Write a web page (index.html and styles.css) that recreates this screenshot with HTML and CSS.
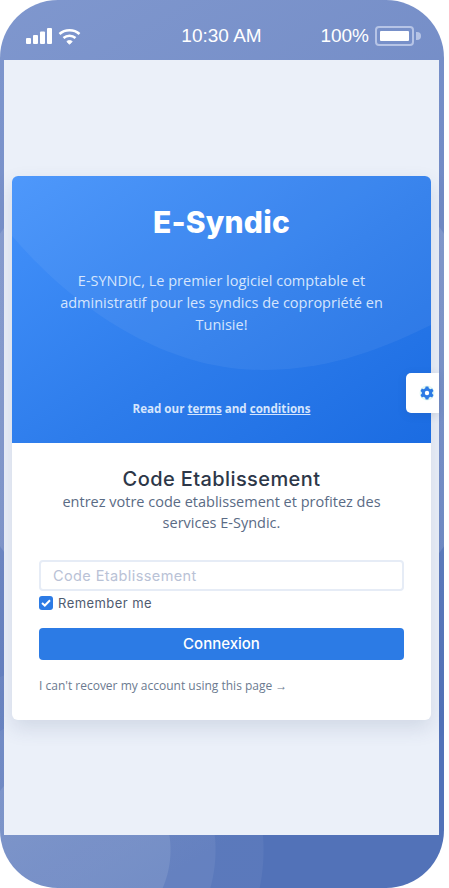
FILE: index.html
```html
<!DOCTYPE html>
<html lang="en">

<head>
    <meta charset="UTF-8" />
    <title>E-Syndic</title>
    <link rel="stylesheet" href="styles.css">
</head>

<body>

    <div class="phone">
        <div class="status-bar">
            <div class="status-left">
                <svg class="signal" width="26" height="16" viewBox="0 0 26 16" fill="#fff">
                    <rect x="0" y="10" width="5" height="6" rx="1" />
                    <rect x="7" y="7" width="5" height="9" rx="1" />
                    <rect x="14" y="3.500" width="5" height="12.500" rx="1" />
                    <rect x="21" y="0" width="5" height="16" rx="1" />
                </svg>
                <svg class="wifi" width="23" height="17" viewBox="0 0 23 17" fill="none" stroke="#fff" stroke-width="2.600">
                    <path d="M1.500 6 C7 1 16 1 21.500 6" />
                    <path d="M5.500 10 C9 7 14 7 17.500 10" />
                    <path d="M8.800 13.500 C10.500 12.300 12.500 12.300 14.200 13.500 L11.500 16.200 Z" fill="#fff" stroke-width="1" />
                </svg>
            </div>
            <div class="status-time">10:30 AM</div>
            <div class="status-right">
                <span>100%</span>
                <div class="battery">
                    <div class="battery-level"></div>
                </div>
                <div class="battery-tip"></div>
            </div>
        </div>

        <div class="screen">
            <div class="card">
                <div class="hero">
                    <svg class="hero-wave" width="419" height="267" viewBox="0 0 419 267">
                        <path d="M0 0 H419 V149 C360 178 310 194 250 194 C150 194 60 130 0 60 Z" fill="#fff" fill-opacity="0.055" />
                    </svg>
                    <h1 class="hero-title">E-Syndic</h1>
                    <p class="hero-text">E-SYNDIC, Le premier logiciel comptable et administratif pour les syndics de copropriété en Tunisie!</p>
                    <p class="hero-terms">Read our <a href="#">terms</a> and <a href="#">conditions</a></p>
                </div>

                <div class="card-body">
                    <h2 class="code-title">Code Etablissement</h2>
                    <p class="code-text">entrez votre code etablissement et profitez des services E-Syndic.</p>
                    <input class="code-input" type="text" placeholder="Code Etablissement">
                    <label class="remember">
                        <span class="check">
                            <svg width="10" height="8" viewBox="0 0 10 8" fill="none" stroke="#fff" stroke-width="2">
                                <path d="M1 4 L3.800 6.500 L9 1.200" />
                            </svg>
                        </span>
                        Remember me
                    </label>
                    <button class="connect">Connexion</button>
                    <a class="recover" href="#">I can't recover my account using this page →</a>
                </div>
            </div>

            <div class="settings-tab">
                <svg width="16" height="16" viewBox="0 0 16 16">
                    <circle cx="8" cy="8" r="7.500" fill="#e3f8f3" />
                    <path d="M6.600 1.500 H9.400 L9.800 3.300 L11.400 4.200 L13.200 3.600 L14.500 6 L13.200 7.200 V8.800 L14.500 10 L13.200 12.400 L11.400 11.800 L9.800 12.700 L9.400 14.500 H6.600 L6.200 12.700 L4.600 11.800 L2.800 12.400 L1.500 10 L2.800 8.800 V7.200 L1.500 6 L2.800 3.600 L4.600 4.200 L6.200 3.300 Z" fill="#2c7be5" />
                    <circle cx="8" cy="8" r="2.200" fill="#fff" />
                </svg>
            </div>
        </div>

        <div class="bottom-bar"></div>
    </div>

</body>

</html>
```

FILE: styles.css
```css
* {
    box-sizing: border-box;
}

body {
    margin: 0;
    background: #fff;
}

.phone {
    width: 444px;
    height: 888px;
    border-radius: 58px;
    overflow: hidden;
    display: flex;
    flex-direction: column;
    padding: 0 5px 0 4px;
    background:
        radial-gradient(circle at 75px 850px, rgba(255, 255, 255, 0.2) 95px, rgba(255, 255, 255, 0.11) 96px, rgba(255, 255, 255, 0.11) 140px, rgba(255, 255, 255, 0.05) 141px, rgba(255, 255, 255, 0.05) 188px, transparent 189px),
        radial-gradient(circle at 222px 390px, rgba(255, 255, 255, 0.12) 271px, transparent 272px),
        linear-gradient(150deg, #7f97ce 0%, #7089c4 45%, #5272b8 85%);
}

/* status bar */
.status-bar {
    height: 60px;
    flex: none;
    display: grid;
    grid-template-columns: 1fr auto 1fr;
    align-items: center;
    padding: 12px 18px 0 22px;
    color: #fff;
    font-family: "Liberation Sans", sans-serif;
    font-size: 19px;
}

.status-left {
    display: flex;
    align-items: center;
    gap: 6px;
}

.status-time {
    margin-right: 4px;
}

.status-right {
    display: flex;
    align-items: center;
    justify-content: flex-end;
}

.battery {
    width: 39px;
    height: 20px;
    margin-left: 6px;
    padding: 3px;
    border: 2px solid #b6c4e6;
    border-radius: 4px;
}

.battery-level {
    height: 100%;
    background: #fff;
    border-radius: 1px;
}

.battery-tip {
    width: 5px;
    height: 8px;
    margin-left: 2px;
    background: #b6c4e6;
    border-radius: 0 4px 4px 0;
}

/* screen */
.screen {
    flex: 1;
    position: relative;
    background: #ebf0f9;
    display: flex;
    align-items: center;
    padding: 0 8px;
}

.card {
    width: 419px;
    background: #fff;
    border-radius: 6px;
    overflow: hidden;
    box-shadow: 0 8px 20px rgba(50, 70, 110, 0.14);
}

.hero {
    position: relative;
    height: 267px;
    padding: 26px 30px 0;
    text-align: center;
    background: linear-gradient(145deg, #4492fb 0%, #2d7ceb 55%, #1b6ce2 100%);
    color: #fff;
    font-family: "Open Sans", sans-serif;
}

.hero-wave {
    position: absolute;
    left: 0;
    top: 0;
}

.hero-title {
    position: relative;
    margin: 0;
    font-family: Inter, sans-serif;
    font-size: 30px;
    font-weight: 800;
    line-height: 40px;
    letter-spacing: 0.2px;
}

.hero-text {
    position: relative;
    margin: 28px 0 0;
    font-size: 14.500px;
    line-height: 22px;
    color: #d5e5fd;
}

.hero-terms {
    position: relative;
    margin: 64px 0 0;
    font-size: 11.600px;
    font-weight: 700;
    line-height: 18px;
    color: #d5e5fd;
}

.hero-terms a {
    color: inherit;
}

.card-body {
    display: flex;
    flex-direction: column;
    height: 277px;
    padding: 25px 27px 0;
    font-family: "Open Sans", sans-serif;
}

.code-title {
    margin: 0;
    text-align: center;
    font-family: Inter, sans-serif;
    font-size: 20px;
    font-weight: 500;
    line-height: 22px;
    letter-spacing: 0.4px;
    color: #2d3748;
}

.code-text {
    margin: 1px 0 0;
    padding: 0 10px;
    text-align: center;
    font-size: 14.500px;
    line-height: 21px;
    color: #5a6b85;
}

.code-input {
    width: 100%;
    height: 31px;
    margin-top: 27px;
    padding: 0 12px;
    border: 2px solid #e6ecf6;
    border-radius: 4px;
    outline: none;
    font-family: Inter, sans-serif;
    font-size: 14.500px;
    letter-spacing: 0.4px;
}

.code-input::placeholder {
    color: #b9c2d6;
}

.remember {
    display: flex;
    align-items: center;
    gap: 5px;
    margin-top: 3px;
    height: 18px;
    font-family: Inter, sans-serif;
    font-size: 13px;
    letter-spacing: 0.45px;
    color: #4f5b70;
}

.check {
    width: 14px;
    height: 14px;
    display: flex;
    align-items: center;
    justify-content: center;
    background: #2c7be5;
    border-radius: 3px;
}

.connect {
    width: 100%;
    height: 32px;
    margin-top: 16px;
    border: none;
    border-radius: 4px;
    background: #2c7be5;
    color: #fff;
    font-family: Inter, sans-serif;
    font-size: 15px;
    font-weight: 500;
}

.recover {
    margin-top: 17px;
    font-size: 12px;
    line-height: 18px;
    color: #6b7a90;
    text-decoration: none;
}

.settings-tab {
    position: absolute;
    right: 0;
    top: 313px;
    width: 33px;
    height: 40px;
    display: flex;
    align-items: center;
    justify-content: center;
    padding-left: 9px;
    background: #fff;
    border-radius: 5px 0 0 5px;
    box-shadow: 0 2px 8px rgba(50, 70, 110, 0.15);
}

.bottom-bar {
    height: 53px;
    flex: none;
}
```
